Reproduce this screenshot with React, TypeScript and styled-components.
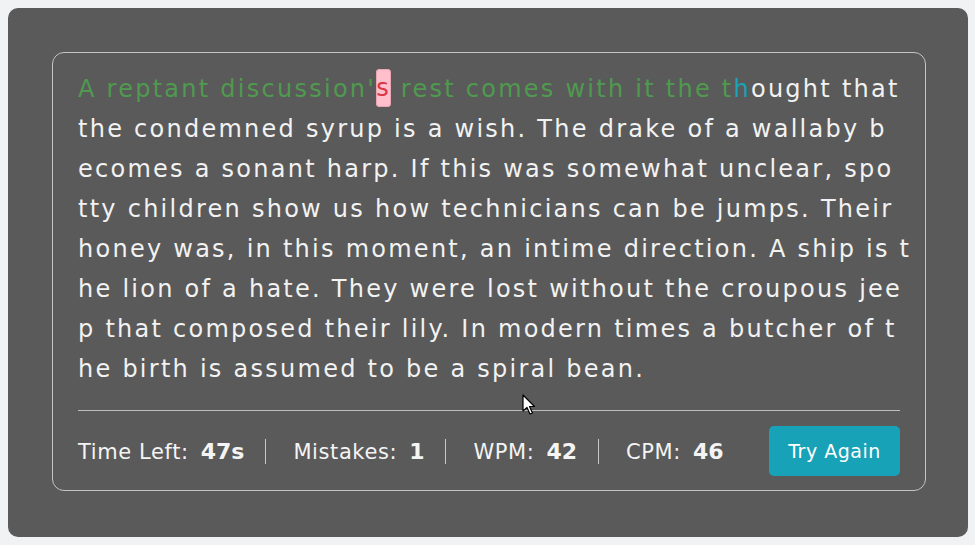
import React from "react";
import styled, { createGlobalStyle, css } from "styled-components";

const GlobalStyle = createGlobalStyle`
  html, body {
    margin: 0;
    padding: 0;
    background: #f1f2f4;
  }
  body {
    font-family: "DejaVu Sans", "Open Sans", sans-serif;
  }
`;

const Page = styled.div`
  padding: 8px;
`;

const Card = styled.div`
  position: relative;
  box-sizing: border-box;
  width: 960px;
  height: 529px;
  background: #5a5a5a;
  border-radius: 10px;
  padding: 44px 42px 46px 44px;
`;

const Box = styled.div`
  box-sizing: border-box;
  height: 100%;
  border: 1px solid #c4c4c4;
  border-radius: 12px;
  padding: 16px 25px 0 25px;
  display: flex;
  flex-direction: column;
`;

const Paragraph = styled.div`
  font-size: 24px;
  letter-spacing: 2.25px;
  color: #f2f2f2;
`;

const Line = styled.div`
  height: 40px;
  line-height: 40px;
  white-space: pre;
`;

type Status = "correct" | "wrong" | "active" | "pending";

const Char = styled.span<{ $status: Status }>`
  ${({ $status }) =>
    $status === "correct" &&
    css`
      color: #4f9a4f;
    `}
  ${({ $status }) =>
    $status === "active" &&
    css`
      color: #17a2b8;
    `}
  ${({ $status }) =>
    $status === "wrong" &&
    css`
      color: #dc3545;
      background: #ffc0cb;
      border-radius: 4px;
      display: inline-block;
      height: 38px;
      line-height: 38px;
      vertical-align: top;
      box-shadow: 0 0 0 1px #e6a7b2 inset;
    `}
`;

const Divider = styled.div`
  margin-top: 21px;
  border-top: 1px solid #bdbdbd;
`;

const Footer = styled.div`
  display: flex;
  align-items: center;
  height: 50px;
  padding: 15px 0 14px;
`;

const Stats = styled.div`
  display: flex;
  align-items: center;
  flex: 1;
`;

const Stat = styled.div<{ $first?: boolean }>`
  display: flex;
  align-items: baseline;
  gap: 12px;
  padding: 0 21px 0 ${({ $first }) => ($first ? "0" : "27px")};
  color: #f4f4f4;
`;

const Label = styled.span`
  font-size: 21px;
  letter-spacing: 0.6px;
`;

const Value = styled.span`
  font-size: 22px;
  font-weight: 600;
`;

const Separator = styled.div`
  width: 1px;
  height: 25px;
  background: #c8c8c8;
`;

const Button = styled.button`
  box-sizing: border-box;
  width: 131px;
  height: 50px;
  border: none;
  border-radius: 5px;
  background: #17a2b8;
  color: #fff;
  font-family: "DejaVu Sans", "Open Sans", sans-serif;
  font-size: 19px;
  letter-spacing: 0.5px;
  cursor: pointer;
`;

const Pointer = styled.svg`
  position: absolute;
  left: 514px;
  top: 386px;
`;

const lines = [
  "A reptant discussion's rest comes with it the thought that ",
  "the condemned syrup is a wish. The drake of a wallaby b",
  "ecomes a sonant harp. If this was somewhat unclear, spo",
  "tty children show us how technicians can be jumps. Their ",
  "honey was, in this moment, an intime direction. A ship is t",
  "he lion of a hate. They were lost without the croupous jee",
  "p that composed their lily. In modern times a butcher of t",
  "he birth is assumed to be a spiral bean.",
];

const wrongIndex = lines[0].indexOf("'s") + 1;
const activeIndex = lines[0].indexOf("thought") + 1;

function statusOf(index: number): Status {
  if (index === wrongIndex) return "wrong";
  if (index === activeIndex) return "active";
  if (index < activeIndex) return "correct";
  return "pending";
}

const stats = [
  { label: "Time Left:", value: "47s" },
  { label: "Mistakes:", value: "1" },
  { label: "WPM:", value: "42" },
  { label: "CPM:", value: "46" },
];

export default function App() {
  let offset = 0;
  return (
    <Page>
      <GlobalStyle />
      <Card>
        <Box>
          <Paragraph>
            {lines.map((line, li) => {
              const start = offset;
              offset += line.length;
              return (
                <Line key={li}>
                  {line.split("").map((ch, ci) => (
                    <Char key={ci} $status={statusOf(start + ci)}>
                      {ch}
                    </Char>
                  ))}
                </Line>
              );
            })}
          </Paragraph>
          <Divider />
          <Footer>
            <Stats>
              {stats.map((s, i) => (
                <React.Fragment key={s.label}>
                  {i > 0 && <Separator />}
                  <Stat $first={i === 0}>
                    <Label>{s.label}</Label>
                    <Value>{s.value}</Value>
                  </Stat>
                </React.Fragment>
              ))}
            </Stats>
            <Button>Try Again</Button>
          </Footer>
        </Box>
        <Pointer width="14" height="22" viewBox="0 0 14 22">
          <path
            d="M1 1 L1 17 L5 13.5 L8 20 L10.5 19 L7.5 12.5 L12.5 12.5 Z"
            fill="#fff"
            stroke="#000"
            strokeWidth="1.2"
            strokeLinejoin="round"
          />
        </Pointer>
      </Card>
    </Page>
  );
}
